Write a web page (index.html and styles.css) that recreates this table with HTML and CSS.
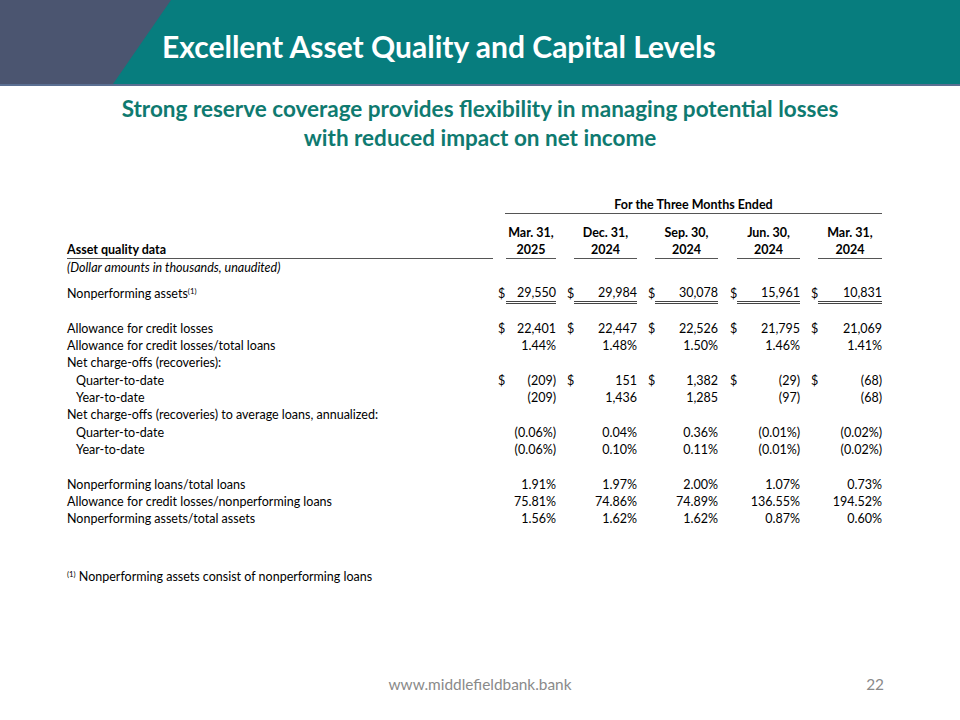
FILE: index.html
```html
<!DOCTYPE html>
<html>
<head>
<meta charset="utf-8">
<link rel="stylesheet" href="styles.css">
</head>
<body>
<div class="slide">
  <header class="banner">
    <h1 class="title">Excellent Asset Quality and Capital Levels</h1>
  </header>
  <p class="subtitle">Strong reserve coverage provides flexibility in managing potential losses<br>with reduced impact on net income</p>

  <div class="table">
    <div class="row period">
      <div class="label"></div>
      <div class="span-head">For the Three Months Ended</div>
    </div>
    <div class="row heads">
      <div class="label head-label">Asset quality data</div>
      <div class="grp g1"><span class="dol"></span><span class="hd">Mar. 31,<br>2025</span></div>
      <div class="grp g2"><span class="dol"></span><span class="hd">Dec. 31,<br>2024</span></div>
      <div class="grp g3"><span class="dol"></span><span class="hd">Sep. 30,<br>2024</span></div>
      <div class="grp g4"><span class="dol"></span><span class="hd">Jun. 30,<br>2024</span></div>
      <div class="grp g5"><span class="dol"></span><span class="hd">Mar. 31,<br>2024</span></div>
    </div>
    <div class="row"><div class="label note">(Dollar amounts in thousands, unaudited)</div></div>
    <div class="spacer-s"></div>
    <div class="row total">
      <div class="label">Nonperforming assets<sup>(1)</sup></div>
      <div class="grp g1"><span class="dol">$</span><span class="val">29,550</span></div>
      <div class="grp g2"><span class="dol">$</span><span class="val">29,984</span></div>
      <div class="grp g3"><span class="dol">$</span><span class="val">30,078</span></div>
      <div class="grp g4"><span class="dol">$</span><span class="val">15,961</span></div>
      <div class="grp g5"><span class="dol">$</span><span class="val">10,831</span></div>
    </div>
    <div class="spacer-l"></div>
    <div class="row">
      <div class="label">Allowance for credit losses</div>
      <div class="grp g1"><span class="dol">$</span><span class="val">22,401</span></div>
      <div class="grp g2"><span class="dol">$</span><span class="val">22,447</span></div>
      <div class="grp g3"><span class="dol">$</span><span class="val">22,526</span></div>
      <div class="grp g4"><span class="dol">$</span><span class="val">21,795</span></div>
      <div class="grp g5"><span class="dol">$</span><span class="val">21,069</span></div>
    </div>
    <div class="row">
      <div class="label">Allowance for credit losses/total loans</div>
      <div class="grp g1"><span class="dol"></span><span class="val">1.44%</span></div>
      <div class="grp g2"><span class="dol"></span><span class="val">1.48%</span></div>
      <div class="grp g3"><span class="dol"></span><span class="val">1.50%</span></div>
      <div class="grp g4"><span class="dol"></span><span class="val">1.46%</span></div>
      <div class="grp g5"><span class="dol"></span><span class="val">1.41%</span></div>
    </div>
    <div class="row"><div class="label">Net charge-offs (recoveries):</div></div>
    <div class="row">
      <div class="label indent">Quarter-to-date</div>
      <div class="grp g1"><span class="dol">$</span><span class="val">(209)</span></div>
      <div class="grp g2"><span class="dol">$</span><span class="val">151</span></div>
      <div class="grp g3"><span class="dol">$</span><span class="val">1,382</span></div>
      <div class="grp g4"><span class="dol">$</span><span class="val">(29)</span></div>
      <div class="grp g5"><span class="dol">$</span><span class="val">(68)</span></div>
    </div>
    <div class="row">
      <div class="label indent">Year-to-date</div>
      <div class="grp g1"><span class="dol"></span><span class="val">(209)</span></div>
      <div class="grp g2"><span class="dol"></span><span class="val">1,436</span></div>
      <div class="grp g3"><span class="dol"></span><span class="val">1,285</span></div>
      <div class="grp g4"><span class="dol"></span><span class="val">(97)</span></div>
      <div class="grp g5"><span class="dol"></span><span class="val">(68)</span></div>
    </div>
    <div class="row"><div class="label">Net charge-offs (recoveries) to average loans, annualized:</div></div>
    <div class="row">
      <div class="label indent">Quarter-to-date</div>
      <div class="grp g1"><span class="dol"></span><span class="val">(0.06%)</span></div>
      <div class="grp g2"><span class="dol"></span><span class="val">0.04%</span></div>
      <div class="grp g3"><span class="dol"></span><span class="val">0.36%</span></div>
      <div class="grp g4"><span class="dol"></span><span class="val">(0.01%)</span></div>
      <div class="grp g5"><span class="dol"></span><span class="val">(0.02%)</span></div>
    </div>
    <div class="row">
      <div class="label indent">Year-to-date</div>
      <div class="grp g1"><span class="dol"></span><span class="val">(0.06%)</span></div>
      <div class="grp g2"><span class="dol"></span><span class="val">0.10%</span></div>
      <div class="grp g3"><span class="dol"></span><span class="val">0.11%</span></div>
      <div class="grp g4"><span class="dol"></span><span class="val">(0.01%)</span></div>
      <div class="grp g5"><span class="dol"></span><span class="val">(0.02%)</span></div>
    </div>
    <div class="spacer-l"></div>
    <div class="row">
      <div class="label">Nonperforming loans/total loans</div>
      <div class="grp g1"><span class="dol"></span><span class="val">1.91%</span></div>
      <div class="grp g2"><span class="dol"></span><span class="val">1.97%</span></div>
      <div class="grp g3"><span class="dol"></span><span class="val">2.00%</span></div>
      <div class="grp g4"><span class="dol"></span><span class="val">1.07%</span></div>
      <div class="grp g5"><span class="dol"></span><span class="val">0.73%</span></div>
    </div>
    <div class="row">
      <div class="label">Allowance for credit losses/nonperforming loans</div>
      <div class="grp g1"><span class="dol"></span><span class="val">75.81%</span></div>
      <div class="grp g2"><span class="dol"></span><span class="val">74.86%</span></div>
      <div class="grp g3"><span class="dol"></span><span class="val">74.89%</span></div>
      <div class="grp g4"><span class="dol"></span><span class="val">136.55%</span></div>
      <div class="grp g5"><span class="dol"></span><span class="val">194.52%</span></div>
    </div>
    <div class="row">
      <div class="label">Nonperforming assets/total assets</div>
      <div class="grp g1"><span class="dol"></span><span class="val">1.56%</span></div>
      <div class="grp g2"><span class="dol"></span><span class="val">1.62%</span></div>
      <div class="grp g3"><span class="dol"></span><span class="val">1.62%</span></div>
      <div class="grp g4"><span class="dol"></span><span class="val">0.87%</span></div>
      <div class="grp g5"><span class="dol"></span><span class="val">0.60%</span></div>
    </div>
  </div>

  <p class="footnote"><sup>(1)</sup> Nonperforming assets consist of nonperforming loans</p>

  <footer class="footer">
    <span class="url">www.middlefieldbank.bank</span>
    <span class="page">22</span>
  </footer>
</div>
</body>
</html>
```

FILE: styles.css
```css
* { box-sizing: border-box; }
html, body { margin: 0; padding: 0; background: #ffffff; }
body {
  font-family: Lato, "Open Sans", "Liberation Sans", sans-serif;
  color: #000;
}
.slide {
  width: 960px;
  height: 720px;
  display: flex;
  flex-direction: column;
  overflow: hidden;
}
.banner {
  position: relative;
  height: 86px;
  flex: none;
  background: #077d7e;
  border-bottom: 2px solid #5a6f92;
}
.banner::before {
  content: "";
  position: absolute;
  left: 0; top: 0;
  width: 172px; height: 84px;
  background: #4b5570;
  clip-path: polygon(0 0, 171px 0, 113px 84px, 0 84px);
}
.title {
  position: relative;
  margin: 0;
  padding: 6px 0 0 162px;
  line-height: 80px;
  font-size: 30px;
  font-weight: 700;
  color: #ffffff;
}
.subtitle {
  margin: 8px 0 0;
  text-align: center;
  color: #0f7a70;
  font-size: 22.5px;
  font-weight: 700;
  line-height: 29px;
}
.table {
  margin: 45px 0 0 67px;
  width: 815px;
  font-size: 12.5px;
}
.row {
  display: grid;
  grid-template-columns: 426px 63px 81px 81px 82px 82px;
  height: 17.35px;
  line-height: 17.35px;
  white-space: nowrap;
}
.period { height: 17px; line-height: 16px; }
.span-head {
  grid-column: 2 / -1;
  margin-left: 12px;
  text-align: center;
  font-weight: 700;
  border-bottom: 1px solid #555;
}
.heads {
  height: auto;
  margin-top: 10px;
  line-height: 17px;
  font-weight: 700;
}
.head-label {
  align-self: end;
  border-bottom: 1px solid #555;
}
.grp { display: flex; }
.g1 { padding-left: 5px; }
.g2, .g3, .g5 { padding-left: 11px; }
.g4 { padding-left: 12px; }
.dol { flex: none; width: 7px; }
.g1 .dol { width: 8px; }
.val { flex: 1; text-align: right; }
.hd {
  flex: 1;
  text-align: center;
  border-bottom: 1px solid #555;
}
.note { font-style: italic; }
.indent { padding-left: 9px; }
.spacer-s { height: 8.6px; }
.spacer-l { height: 17.35px; }
.total .val {
  line-height: 16px;
  height: 19px;
  border-bottom: 3px double #444;
}
sup { font-size: 0.62em; line-height: 0; vertical-align: 0.55em; }
.footnote {
  margin: 40px 0 0 67px;
  font-size: 12.5px;
  line-height: 17px;
}
.footer {
  margin-top: auto;
  height: 46px;
  position: relative;
  display: flex;
  justify-content: center;
  color: #8a8a8a;
  font-size: 15.4px;
  line-height: 20px;
}
.page {
  position: absolute;
  right: 76px;
  top: 0;
}
```
